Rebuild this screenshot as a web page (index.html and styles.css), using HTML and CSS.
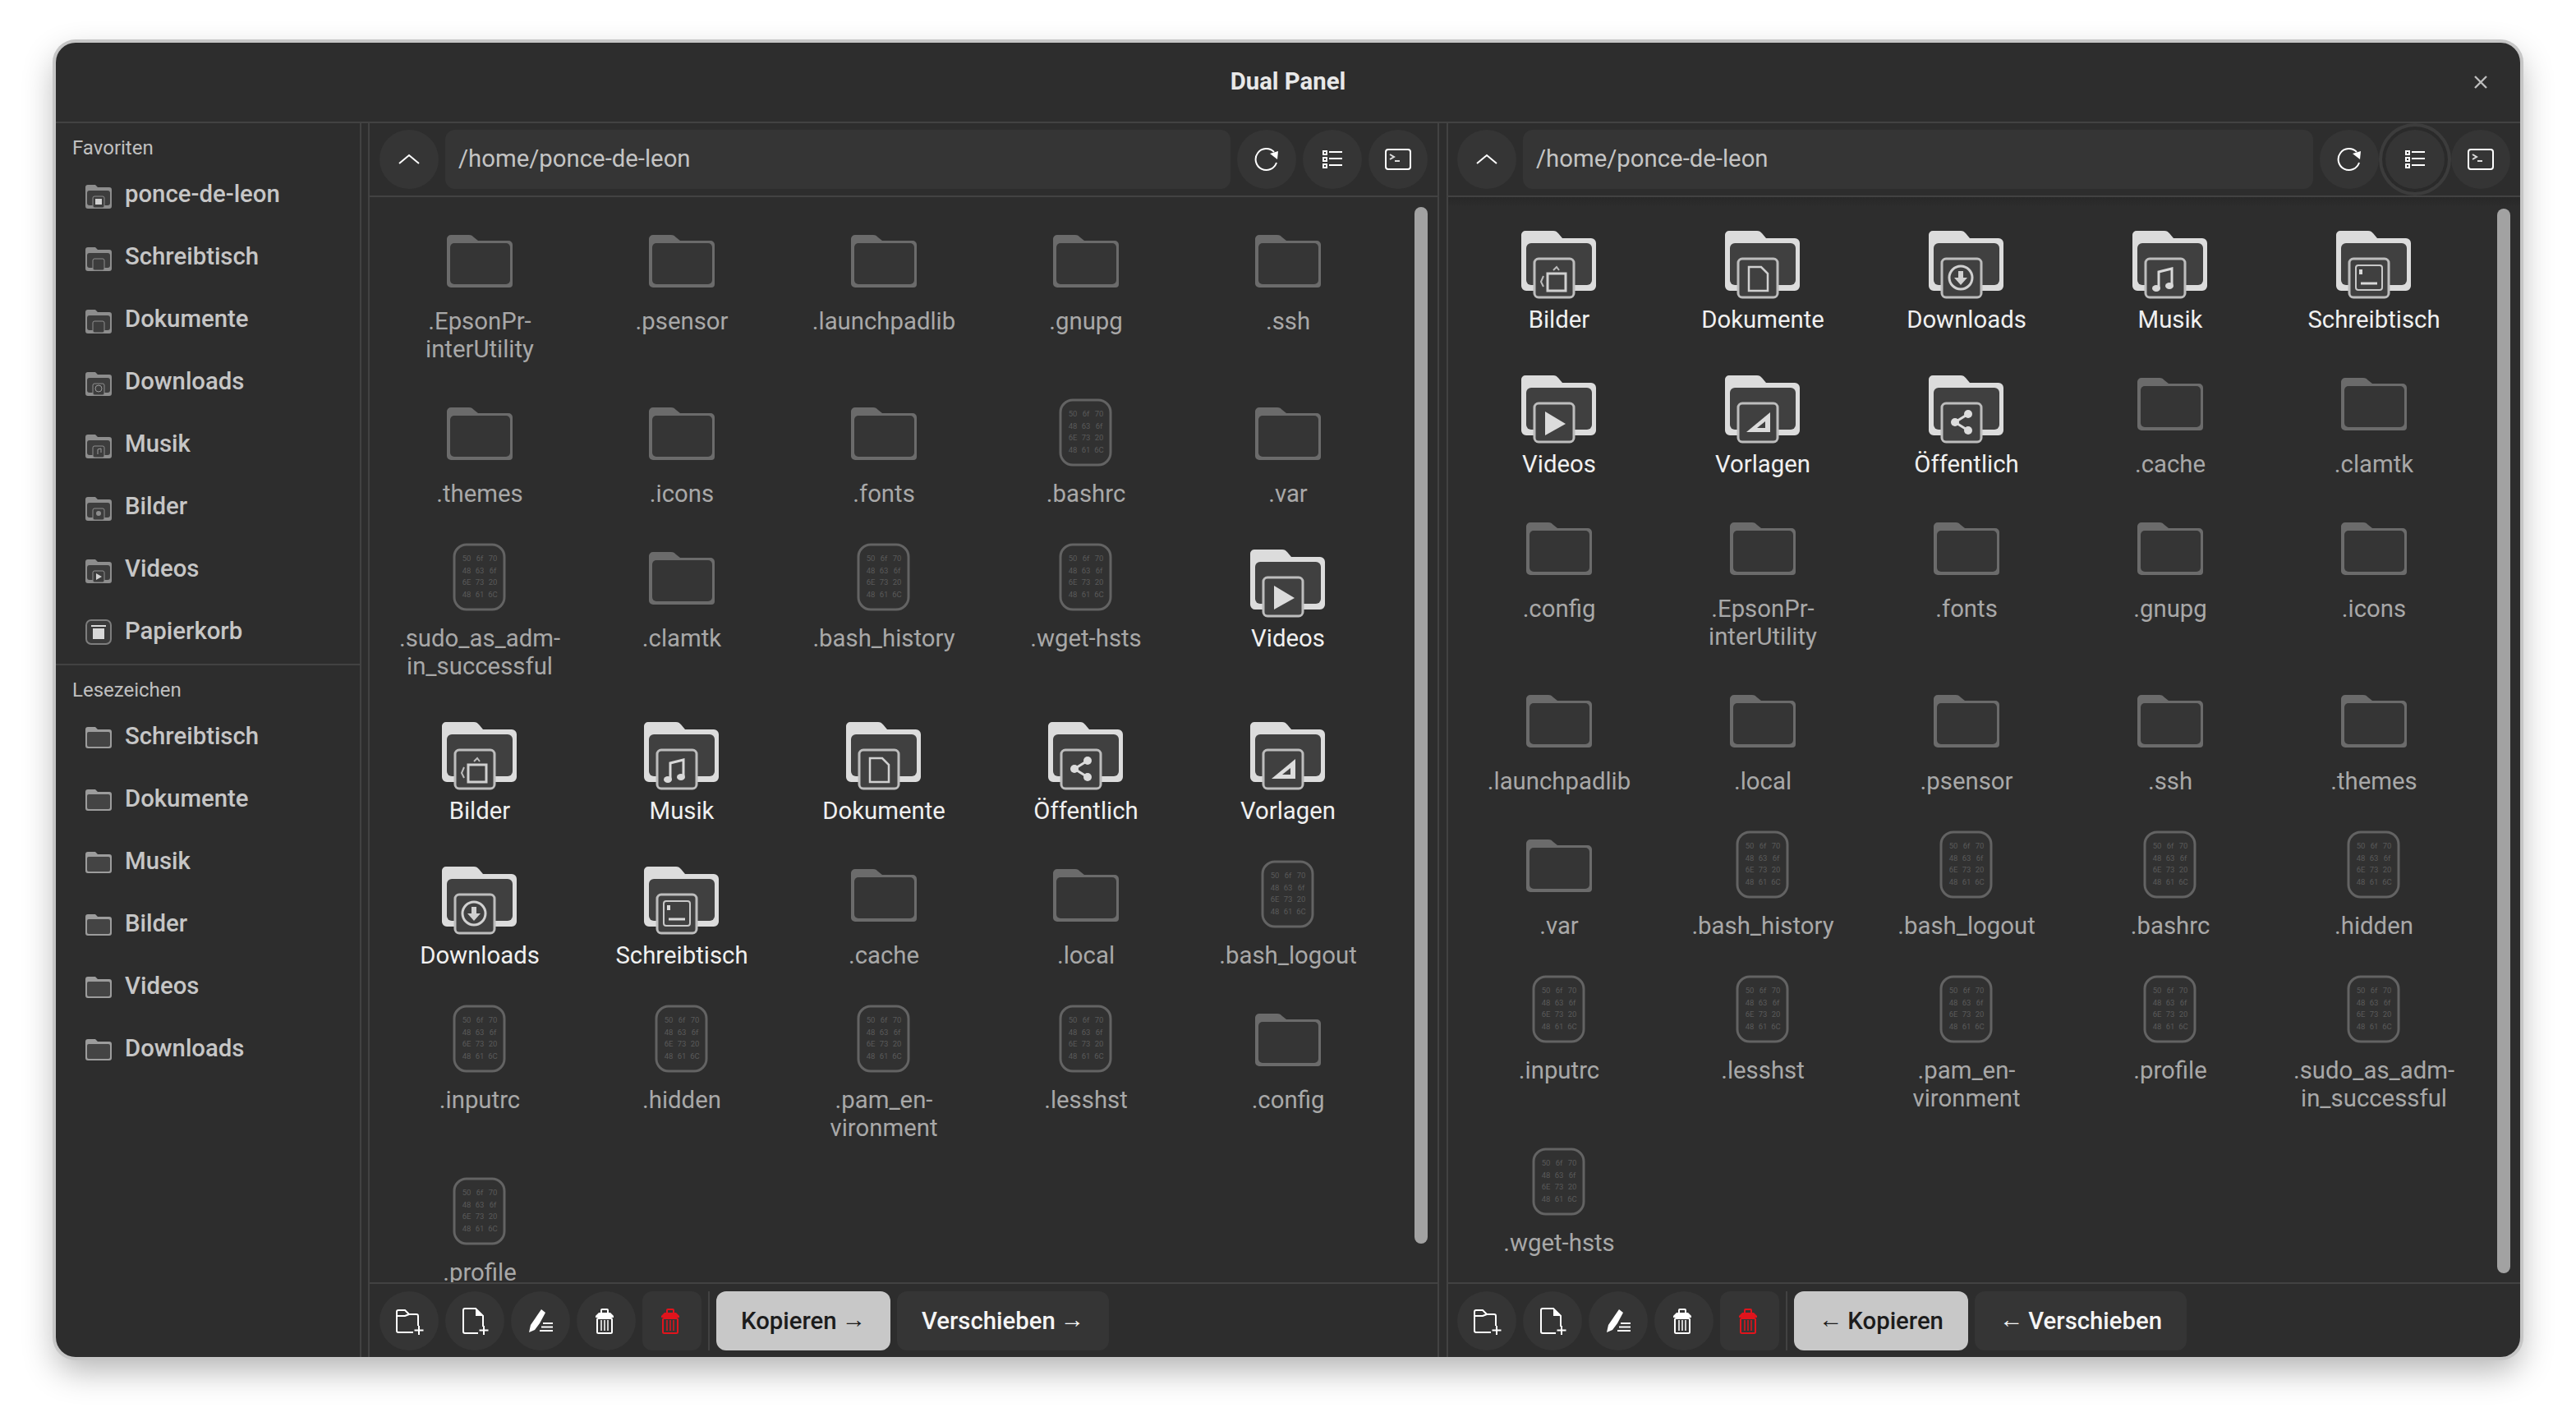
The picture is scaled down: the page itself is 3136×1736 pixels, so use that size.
FILE: index.html
```html
<!DOCTYPE html>
<html lang="de">
<head>
    <meta charset="UTF-8">
    <title>Dual Panel</title>
    <link rel="stylesheet" href="styles.css">
</head>
<body>

    <svg class="defs" width="0" height="0">
        <defs>
            <g id="folder-dim">
                <path d="M1 8a5 5 0 0 1 5-5h22c3 0 4 1 6 3l5 4h37a5 5 0 0 1 5 5v48a4 4 0 0 1-4 4H6a5 5 0 0 1-5-5z" fill="#6b6b6b"/>
                <rect x="5" y="13" width="73" height="50" rx="5" fill="#353535"/>
            </g>
            <g id="file-dim">
                <rect x="2" y="2" width="61" height="79" rx="15" fill="#313131" stroke="#636363" stroke-width="3"/>
                <g fill="#5a5a5a" font-family="Roboto, sans-serif" font-size="9.5" text-anchor="middle">
                    <text x="17" y="22">50</text><text x="33" y="22">6f</text><text x="49" y="22">70</text>
                    <text x="17" y="37">48</text><text x="33" y="37">63</text><text x="49" y="37">6f</text>
                    <text x="17" y="51">6E</text><text x="33" y="51">73</text><text x="49" y="51">20</text>
                    <text x="17" y="66">48</text><text x="33" y="66">61</text><text x="49" y="66">6C</text>
                </g>
            </g>
            <g id="folder-special">
                <path d="M0 5a5 5 0 0 1 5-5h34c3 0 4 1 6 3l5 6h35a6 6 0 0 1 6 6v52a6 6 0 0 1-6 6H6a6 6 0 0 1-6-6z" fill="#dcdcdc"/>
                <rect x="6" y="15" width="80" height="51" rx="6" fill="#404040"/>
                <rect x="16" y="34" width="48" height="47" rx="5" fill="#404040" stroke="#bdbdbd" stroke-width="3"/>
            </g>
            <g id="mini-folder">
                <path d="M0 3a3 3 0 0 1 3-3h9l3 3h14a3 3 0 0 1 3 3v20a3 3 0 0 1-3 3H3a3 3 0 0 1-3-3z" fill="#8d8d8d"/>
                <rect x="2" y="7" width="28" height="18" rx="3" fill="#3d3d3d"/>
                <rect x="9" y="14" width="14" height="14" rx="2" fill="#3d3d3d" stroke="#8d8d8d" stroke-width="1"/>
            </g>
            <g id="mark-folder">
                <path d="M0 3a3 3 0 0 1 3-3h9l3 3h14a3 3 0 0 1 3 3v17a3 3 0 0 1-3 3H3a3 3 0 0 1-3-3z" fill="#9c9c9c"/>
                <rect x="2" y="6" width="28" height="18" rx="2" fill="#444"/>
            </g>
            <g id="ic-trash">
                <path d="M12 8V5a1 1 0 0 1 1-1h6a1 1 0 0 1 1 1v3" fill="none" stroke="currentColor" stroke-width="2"/>
                <path d="M9 8h14l4 4v2H5v-2z" fill="currentColor"/>
                <rect x="7" y="15" width="18" height="18" rx="1.5" fill="none" stroke="currentColor" stroke-width="2"/>
                <path d="M12 17v13M16 17v13M20 17v13" stroke="currentColor" stroke-width="1.5"/>
            </g>
            <g id="ic-new-folder">
                <path d="M23 32H5a2 2 0 0 1-2-2V7a2 2 0 0 1 2-2h8l5 5h9a2 2 0 0 1 2 2v12M3 12h10l5-2" fill="none" stroke="currentColor" stroke-width="2"/>
                <path d="M30 24v11M24.500 29.500h11" stroke="currentColor" stroke-width="2"/>
            </g>
            <g id="ic-new-file">
                <path d="M22 33H6a2 2 0 0 1-2-2V5a2 2 0 0 1 2-2h13l9 9v13" fill="none" stroke="currentColor" stroke-width="2"/>
                <path d="M19 3l9 9h-9z" fill="currentColor"/>
                <path d="M29 24v11M23.500 29.500h11" stroke="currentColor" stroke-width="2"/>
            </g>
            <g id="ic-rename">
                <path d="M4 32l2-9L19 4l5 4-7 13-6 8z" fill="currentColor"/>
                <path d="M21 21h12M19 25.500h14M17 30h16" stroke="currentColor" stroke-width="2"/>
            </g>
        </defs>
    </svg>

    <div class="window">
        <header class="titlebar">
            <h1>Dual Panel</h1>
            <svg class="close" width="16" height="16" viewBox="0 0 16 16"><path d="M1 1l14 14M15 1L1 15" stroke="#bdbdbd" stroke-width="2.4"/></svg>
        </header>

        <div class="body">
            <aside class="sidebar">
                <div class="side-title">Favoriten</div>
                <div class="side-row"><svg class="side-icon"><use href="#mini-folder"/><rect x="12" y="17" width="8" height="7" fill="#d0d0d0"/></svg>ponce-de-leon</div>
                <div class="side-row"><svg class="side-icon"><use href="#mini-folder"/></svg>Schreibtisch</div>
                <div class="side-row"><svg class="side-icon"><use href="#mini-folder"/></svg>Dokumente</div>
                <div class="side-row"><svg class="side-icon"><use href="#mini-folder"/><circle cx="16" cy="20" r="4" fill="none" stroke="#9a9a9a"/></svg>Downloads</div>
                <div class="side-row"><svg class="side-icon"><use href="#mini-folder"/><path d="M15 24v-6l4-1v5" fill="none" stroke="#9a9a9a"/></svg>Musik</div>
                <div class="side-row"><svg class="side-icon"><use href="#mini-folder"/><circle cx="16" cy="20" r="3" fill="#8d8d8d"/></svg>Bilder</div>
                <div class="side-row"><svg class="side-icon"><use href="#mini-folder"/><path d="M13 17l7 4-7 4z" fill="#d0d0d0"/></svg>Videos</div>
                <div class="side-row"><svg class="side-icon"><rect x="1" y="-2" width="30" height="29" rx="6" fill="#3a3a3a" stroke="#7d7d7d" stroke-width="2"/><path d="M7 4h18v2H7zM9 8h14v13H9z" fill="#d8d8d8"/></svg>Papierkorb</div>

                <div class="side-divider"></div>

                <div class="side-title">Lesezeichen</div>
                <div class="side-row"><svg class="side-icon"><use href="#mark-folder"/></svg>Schreibtisch</div>
                <div class="side-row"><svg class="side-icon"><use href="#mark-folder"/></svg>Dokumente</div>
                <div class="side-row"><svg class="side-icon"><use href="#mark-folder"/></svg>Musik</div>
                <div class="side-row"><svg class="side-icon"><use href="#mark-folder"/></svg>Bilder</div>
                <div class="side-row"><svg class="side-icon"><use href="#mark-folder"/></svg>Videos</div>
                <div class="side-row"><svg class="side-icon"><use href="#mark-folder"/></svg>Downloads</div>
            </aside>

            <div class="panes">
                <section class="pane pane-left">
                    <div class="toolbar">
                        <button class="round"><svg width="26" height="14" viewBox="0 0 26 14"><path d="M1 12L13 2l12 10" fill="none" stroke="#fff" stroke-width="2"/></svg></button>
                        <div class="path">/home/ponce-de-leon</div>
                        <button class="round"><svg width="30" height="30" viewBox="0 0 30 30"><path d="M27 19a13 13 0 1 1-3-13" fill="none" stroke="#fff" stroke-width="2"/><path d="M18 7l10-3-1 10z" fill="#fff" transform="translate(1 1)"/></svg></button>
                        <button class="round"><svg width="24" height="22" viewBox="0 0 24 22"><path d="M0 0h6v6H0zM0 8h6v6H0zM0 16h6v6H0z" fill="#fff"/><path d="M2 2h2v2H2zM2 10h2v2H2zM2 18h2v2H2z" fill="#2d2d2d"/><path d="M8 2h16M8 10h16M8 18h16" stroke="#fff" stroke-width="2"/></svg></button>
                        <button class="round"><svg width="32" height="26" viewBox="0 0 32 26"><rect x="1" y="1" width="30" height="24" rx="3" fill="none" stroke="#fff" stroke-width="2"/><path d="M6 7l5 3-5 3" fill="none" stroke="#ddd" stroke-width="2"/><path d="M12 15h6" stroke="#ddd" stroke-width="2"/></svg></button>
                    </div>
                    <div class="files-wrap">
                        <div class="files" id="files-left"></div>
                        <div class="scrollbar"></div>
                    </div>
                    <div class="actions">
                        <button class="round"><svg class="act"><use href="#ic-new-folder"/></svg></button>
                        <button class="round"><svg class="act"><use href="#ic-new-file"/></svg></button>
                        <button class="round"><svg class="act"><use href="#ic-rename"/></svg></button>
                        <button class="round"><svg class="act"><use href="#ic-trash"/></svg></button>
                        <button class="square"><svg class="act danger"><use href="#ic-trash"/></svg></button>
                        <div class="sep"></div>
                        <button class="text-btn primary">Kopieren<span class="arrow arrow-after">→</span></button>
                        <button class="text-btn">Verschieben<span class="arrow arrow-after">→</span></button>
                    </div>
                </section>

                <section class="pane pane-right">
                    <div class="toolbar">
                        <button class="round"><svg width="26" height="14" viewBox="0 0 26 14"><path d="M1 12L13 2l12 10" fill="none" stroke="#fff" stroke-width="2"/></svg></button>
                        <div class="path">/home/ponce-de-leon</div>
                        <button class="round"><svg width="30" height="30" viewBox="0 0 30 30"><path d="M27 19a13 13 0 1 1-3-13" fill="none" stroke="#fff" stroke-width="2"/><path d="M18 7l10-3-1 10z" fill="#fff" transform="translate(1 1)"/></svg></button>
                        <button class="round focused"><svg width="24" height="22" viewBox="0 0 24 22"><path d="M0 0h6v6H0zM0 8h6v6H0zM0 16h6v6H0z" fill="#fff"/><path d="M2 2h2v2H2zM2 10h2v2H2zM2 18h2v2H2z" fill="#2d2d2d"/><path d="M8 2h16M8 10h16M8 18h16" stroke="#fff" stroke-width="2"/></svg></button>
                        <button class="round"><svg width="32" height="26" viewBox="0 0 32 26"><rect x="1" y="1" width="30" height="24" rx="3" fill="none" stroke="#fff" stroke-width="2"/><path d="M6 7l5 3-5 3" fill="none" stroke="#ddd" stroke-width="2"/><path d="M12 15h6" stroke="#ddd" stroke-width="2"/></svg></button>
                    </div>
                    <div class="files-wrap">
                        <div class="undershoot"></div>
                        <div class="files" id="files-right"></div>
                        <div class="scrollbar"></div>
                    </div>
                    <div class="actions">
                        <button class="round"><svg class="act"><use href="#ic-new-folder"/></svg></button>
                        <button class="round"><svg class="act"><use href="#ic-new-file"/></svg></button>
                        <button class="round"><svg class="act"><use href="#ic-rename"/></svg></button>
                        <button class="round"><svg class="act"><use href="#ic-trash"/></svg></button>
                        <button class="square"><svg class="act danger"><use href="#ic-trash"/></svg></button>
                        <div class="sep"></div>
                        <button class="text-btn primary"><span class="arrow arrow-before">←</span>Kopieren</button>
                        <button class="text-btn"><span class="arrow arrow-before">←</span>Verschieben</button>
                    </div>
                </section>
            </div>
        </div>
    </div>

    <script src="files.js"></script>
</body>
</html>
```

FILE: styles.css
```css
* {
    box-sizing: border-box;
}
html, body {
    height: 100%;
}
body {
    margin: 0;
    background-color: #fff;
    font-family: Roboto, sans-serif;
    display: flex;
    padding: 52px 68px 84px;
}
.defs {
    position: absolute;
}
.window {
    flex: 1;
    display: flex;
    flex-direction: column;
    background-color: #2d2d2d;
    border-radius: 24px;
    overflow: hidden;
    box-shadow: 0 0 0 4px #c6c6c6, 0 16px 40px rgba(0, 0, 0, 0.3);
}
.titlebar {
    height: 98px;
    flex: none;
    display: flex;
    align-items: center;
    justify-content: center;
    border-bottom: 2px solid #424242;
    padding-bottom: 2px;
    position: relative;
}
.titlebar h1 {
    margin: 0;
    font-size: 29.33px;
    font-weight: 700;
    color: #e8e8e8;
}
.close {
    position: absolute;
    right: 40px;
    top: 40px;
}
.body {
    flex: 1;
    display: flex;
    min-height: 0;
}
.sidebar {
    width: 372px;
    flex: none;
    border-right: 2px solid #424242;
    color: #c6c6c6;
}
.side-title {
    font-size: 24px;
    color: #c0c0c0;
    height: 34px;
    line-height: 34px;
    padding-left: 20px;
    margin-top: 13px;
}
.side-row {
    height: 76px;
    display: flex;
    align-items: center;
    gap: 16px;
    padding: 2px 0 0 36px;
    font-size: 29.33px;
    font-weight: 500;
}
.side-icon {
    width: 32px;
    height: 31px;
    flex: none;
    margin-top: 8px;
    overflow: visible;
}
.side-divider {
    height: 2px;
    background-color: #424242;
    margin-top: 3px;
}
.panes {
    flex: 1;
    display: flex;
    gap: 9px;
    padding-left: 8px;
    min-width: 0;
}
.pane {
    display: flex;
    flex-direction: column;
    border-left: 2px solid #424242;
    min-width: 0;
}
.pane-left {
    width: 1304px;
    flex: none;
    border-right: 2px solid #424242;
}
.pane-right {
    flex: 1;
}
.toolbar {
    height: 90px;
    flex: none;
    display: flex;
    align-items: center;
    gap: 8px;
    padding: 0 12px;
    border-bottom: 2px solid #424242;
}
.pane-right .toolbar {
    padding-left: 11px;
}
button {
    border: none;
    font-family: inherit;
    color: #fff;
    background-color: #353535;
    padding: 0;
    display: flex;
    align-items: center;
    justify-content: center;
    flex: none;
    height: 72px;
}
.round {
    width: 72px;
    border-radius: 50%;
}
.square {
    width: 72px;
    border-radius: 12px;
}
.focused {
    box-shadow: 0 0 0 4px #2a2a2a, 0 0 0 8px #3c3c3c;
}
.path {
    flex: 1;
    height: 72px;
    line-height: 70px;
    background-color: #353535;
    border-radius: 12px;
    padding-left: 16px;
    font-size: 29.33px;
    color: #c4c4c4;
}
.files-wrap {
    flex: 1;
    position: relative;
    overflow: hidden;
    min-height: 0;
}
.files {
    display: grid;
    align-items: start;
}
#files-left {
    grid-template-columns: repeat(5, 246px);
    padding: 18px 0 0 11px;
}
#files-right {
    grid-template-columns: repeat(5, 248px);
    padding: 16px 0 0 11px;
}
.file {
    display: flex;
    flex-direction: column;
    align-items: center;
    padding-bottom: 26px;
}
.file svg {
    display: block;
    width: 96px;
    height: 108px;
    margin-bottom: 8px;
}
.file-name {
    font-size: 29.33px;
    line-height: 34px;
    text-align: center;
    color: #a8a8a8;
    width: 220px;
}
.file.special .file-name {
    color: #f0f0f0;
}
.scrollbar {
    position: absolute;
    right: 12px;
    width: 16px;
    top: 12px;
    border-radius: 8px;
    background-color: #a2a2a2;
}
.pane-left .scrollbar {
    height: 1262px;
}
.pane-right .scrollbar {
    top: 14px;
    height: 1296px;
}
.undershoot {
    position: absolute;
    left: 0;
    top: 0;
    width: 100%;
    height: 12px;
    background: linear-gradient(#282828, #2d2d2d);
}
.actions {
    height: 91px;
    flex: none;
    display: flex;
    align-items: flex-start;
    gap: 8px;
    padding: 9px 12px 0;
    border-top: 2px solid #424242;
}
.pane-right .actions {
    padding-left: 11px;
}
.act {
    width: 36px;
    height: 36px;
    color: #fff;
}
.danger {
    color: #e0141c;
}
.sep {
    width: 2px;
    height: 72px;
    background-color: #424242;
}
.text-btn {
    padding: 0 16px;
    width: 258px;
    border-radius: 12px;
    font-size: 29.33px;
    font-weight: 500;
    color: #f4f4f4;
    white-space: pre;
}
.primary {
    width: 212px;
    background-color: #c8c8c8;
    color: #1c1c1c;
}
.arrow {
    font-family: "Liberation Sans", sans-serif;
    font-weight: 400;
    font-size: 29.33px;
    margin-top: -4px;
}
.arrow-after {
    margin-left: 6px;
}
.arrow-before {
    margin-right: 6px;
}
```

FILE: files.js
```js
// icon drawn on top of the special folder, in the coordinates of #folder-special
const emblems = {
    Bilder: '<rect x="32" y="52" width="22" height="21" fill="none" stroke="#d0d0d0" stroke-width="3"/><path d="M27 55l-3 7 3 6M39 48l4-4 3 4" fill="none" stroke="#bbb" stroke-width="2"/>',
    Dokumente: '<path d="M29 44h15l8 8v21H29z" fill="none" stroke="#d0d0d0" stroke-width="2.5"/>',
    Downloads: '<circle cx="39" cy="57" r="14" fill="none" stroke="#d0d0d0" stroke-width="3"/><path d="M36 49h6v8h5l-8 9-8-9h5z" fill="#d0d0d0"/>',
    Musik: '<path d="M32 70V50l16-4v20" fill="none" stroke="#d8d8d8" stroke-width="3"/><ellipse cx="29" cy="70" rx="5" ry="4" fill="#d8d8d8"/><ellipse cx="45" cy="67" rx="5" ry="4" fill="#d8d8d8"/>',
    Schreibtisch: '<rect x="24" y="42" width="32" height="30" rx="3" fill="none" stroke="#c8c8c8" stroke-width="2"/><path d="M30 47v6" stroke="#d8d8d8" stroke-width="4"/><path d="M30 64h20" stroke="#d8d8d8" stroke-width="3"/>',
    Videos: '<path d="M29 44l25 15-25 14z" fill="#dcdcdc"/>',
    Vorlagen: '<path d="M26 69l29-24v24z" fill="#dcdcdc"/><path d="M39 64l10-8v8z" fill="#404040"/>',
    'Öffentlich': '<path d="M32 57l16-10M32 57l16 10" stroke="#dcdcdc" stroke-width="3"/><circle cx="32" cy="57" r="5" fill="#dcdcdc"/><circle cx="48" cy="47" r="5" fill="#dcdcdc"/><circle cx="48" cy="67" r="5" fill="#dcdcdc"/>'
};

const leftFiles = [
    ['.EpsonPr-<br>interUtility', 'd'], ['.psensor', 'd'], ['.launchpadlib', 'd'], ['.gnupg', 'd'], ['.ssh', 'd'],
    ['.themes', 'd'], ['.icons', 'd'], ['.fonts', 'd'], ['.bashrc', 'f'], ['.var', 'd'],
    ['.sudo_as_adm-<br>in_successful', 'f'], ['.clamtk', 'd'], ['.bash_history', 'f'], ['.wget-hsts', 'f'], ['Videos', 's'],
    ['Bilder', 's'], ['Musik', 's'], ['Dokumente', 's'], ['Öffentlich', 's'], ['Vorlagen', 's'],
    ['Downloads', 's'], ['Schreibtisch', 's'], ['.cache', 'd'], ['.local', 'd'], ['.bash_logout', 'f'],
    ['.inputrc', 'f'], ['.hidden', 'f'], ['.pam_en-<br>vironment', 'f'], ['.lesshst', 'f'], ['.config', 'd'],
    ['.profile', 'f']
];

const rightFiles = [
    ['Bilder', 's'], ['Dokumente', 's'], ['Downloads', 's'], ['Musik', 's'], ['Schreibtisch', 's'],
    ['Videos', 's'], ['Vorlagen', 's'], ['Öffentlich', 's'], ['.cache', 'd'], ['.clamtk', 'd'],
    ['.config', 'd'], ['.EpsonPr-<br>interUtility', 'd'], ['.fonts', 'd'], ['.gnupg', 'd'], ['.icons', 'd'],
    ['.launchpadlib', 'd'], ['.local', 'd'], ['.psensor', 'd'], ['.ssh', 'd'], ['.themes', 'd'],
    ['.var', 'd'], ['.bash_history', 'f'], ['.bash_logout', 'f'], ['.bashrc', 'f'], ['.hidden', 'f'],
    ['.inputrc', 'f'], ['.lesshst', 'f'], ['.pam_en-<br>vironment', 'f'], ['.profile', 'f'], ['.sudo_as_adm-<br>in_successful', 'f'],
    ['.wget-hsts', 'f']
];

function fileIcon(name, type) {
    if (type === 'd') {
        return '<svg viewBox="0 0 96 108"><use href="#folder-dim" x="7" y="25"/></svg>';
    }
    if (type === 'f') {
        return '<svg viewBox="0 0 96 108"><use href="#file-dim" x="15" y="17"/></svg>';
    }
    return '<svg viewBox="0 0 96 108"><g transform="translate(2 25)"><use href="#folder-special"/>' + emblems[name] + '</g></svg>';
}

function fillGrid(id, files) {
    const grid = document.getElementById(id);
    files.forEach(function (item) {
        const div = document.createElement('div');
        div.className = item[1] === 's' ? 'file special' : 'file';
        div.innerHTML = fileIcon(item[0], item[1]) + '<div class="file-name">' + item[0] + '</div>';
        grid.appendChild(div);
    });
}

fillGrid('files-left', leftFiles);
fillGrid('files-right', rightFiles);
```
